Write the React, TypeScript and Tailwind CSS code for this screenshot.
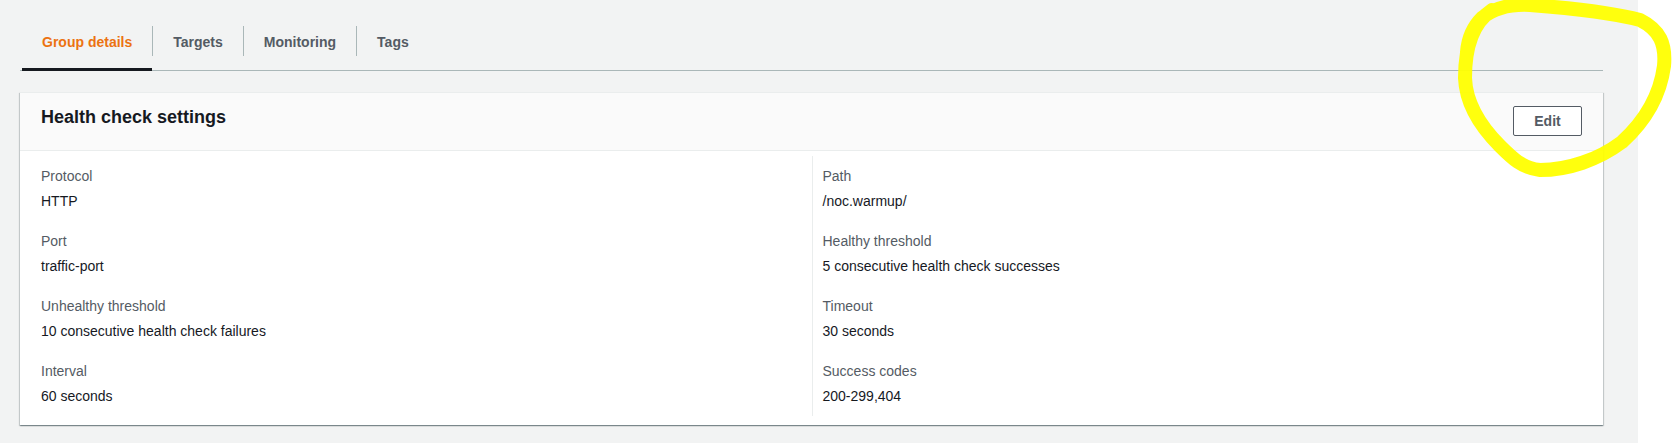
const tabs = ["Group details", "Targets", "Monitoring", "Tags"];

const leftItems = [
  { label: "Protocol", value: "HTTP" },
  { label: "Port", value: "traffic-port" },
  { label: "Unhealthy threshold", value: "10 consecutive health check failures" },
  { label: "Interval", value: "60 seconds" },
];

const rightItems = [
  { label: "Path", value: "/noc.warmup/" },
  { label: "Healthy threshold", value: "5 consecutive health check successes" },
  { label: "Timeout", value: "30 seconds" },
  { label: "Success codes", value: "200-299,404" },
];

function Field({ label, value }: { label: string; value: string }) {
  return (
    <div>
      <div className="text-[14px] leading-[22px] text-[#545b64] mb-[3px]">{label}</div>
      <div className="text-[14px] leading-[22px] text-[#16191f]">{value}</div>
    </div>
  );
}

function Scribble() {
  // freehand highlighter loop drawn over the Edit button
  return (
    <svg
      className="absolute left-0 top-0 pointer-events-none"
      width="1672"
      height="443"
      viewBox="0 0 1672 443"
    >
      <path
        d="M1492 10 C1474 22 1465 44 1465 78 C1466 104 1482 128 1500 146 C1512 158 1522 168 1540 170 C1568 170 1598 160 1622 142 C1644 122 1660 96 1664 66 C1666 44 1660 30 1640 20 C1610 12 1570 8 1530 5 C1510 4 1494 8 1482 18 C1472 28 1468 40 1467 52"
        fill="none"
        stroke="#ffff00"
        strokeWidth="14"
        strokeLinecap="round"
        strokeLinejoin="round"
        opacity="0.95"
      />
    </svg>
  );
}

export default function App() {
  return (
    <div
      className="relative flex w-[1672px] h-[443px] overflow-hidden bg-white"
      style={{ fontFamily: '"Liberation Sans", Arial, sans-serif' }}
    >
      <div className="w-[1638px] h-full bg-[#f2f3f3] pl-[20px] pt-[16px]">
        {/* Tabs */}
        <div className="flex w-[1583px] border-b border-[#aab7b8]">
          {tabs.map((tab, i) => (
            <div key={tab} className="flex">
              {i > 0 && <div className="w-px h-[30px] mt-[10px] bg-[#aab7b8]" />}
              <div
                className={
                  "h-[55px] -mb-px flex items-center px-[20px] text-[14px] font-bold border-b-[3px] " +
                  (i === 0
                    ? "ml-[2px] text-[#ec7211] border-[#16191f]"
                    : "text-[#545b64] border-transparent")
                }
              >
                {tab}
              </div>
            </div>
          ))}
        </div>

        {/* Card */}
        <div className="mt-[21px] w-[1583px] bg-white border-t border-[#eaeded] shadow-[0_1px_1px_0_rgba(0,28,36,0.3),1px_1px_1px_0_rgba(0,28,36,0.15),-1px_1px_1px_0_rgba(0,28,36,0.15)]">
          <div className="h-[58px] bg-[#fafafa] border-b border-[#eaeded] px-[21px] pt-[13px] flex items-start justify-between">
            <h2 className="text-[18px] leading-[22px] font-bold text-[#16191f]">
              Health check settings
            </h2>
            <button className="w-[69px] h-[30px] border border-[#545b64] rounded-[2px] bg-white text-[14px] font-bold text-[#545b64]">
              Edit
            </button>
          </div>
          <div className="grid grid-cols-2 px-[21px] pt-[5px] pb-[9px]">
            <div className="flex flex-col gap-[18px] pt-[9px] pb-[9px]">
              {leftItems.map((it) => (
                <Field key={it.label} {...it} />
              ))}
            </div>
            <div className="flex flex-col gap-[18px] pt-[9px] pb-[9px] pl-[10px] border-l border-[#eaeded]">
              {rightItems.map((it) => (
                <Field key={it.label} {...it} />
              ))}
            </div>
          </div>
        </div>
      </div>
      <Scribble />
    </div>
  );
}
